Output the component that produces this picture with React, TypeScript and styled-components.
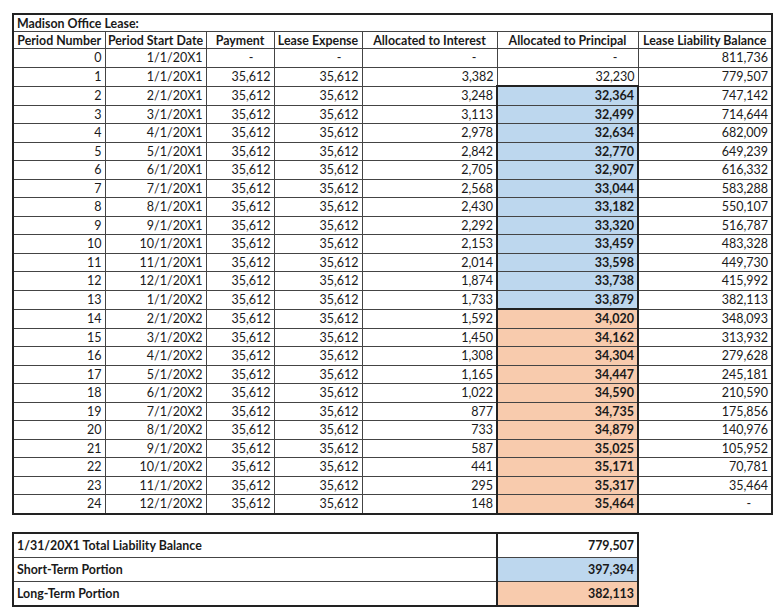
import React from "react";
import styled, { createGlobalStyle } from "styled-components";

const GlobalStyle = createGlobalStyle`
  html, body {
    margin: 0;
    padding: 0;
    background: #ffffff;
  }
  body {
    font-family: Lato, "Open Sans", "Liberation Sans", sans-serif;
    color: #1a1a1a;
  }
`;

type Fill = "none" | "blue" | "peach";

const fillColor: Record<Fill, string> = {
  none: "#ffffff",
  blue: "#bdd7ee",
  peach: "#f8cbad",
};

const Page = styled.div`
  padding: 13px 12px 0 12px;
  display: flex;
  flex-direction: column;
  gap: 17px;
`;

const Sheet = styled.table`
  border-collapse: collapse;
  table-layout: fixed;
  width: 759px;
  border: 2px solid #222;
  font-size: 12.5px;
`;

const TitleCell = styled.td`
  height: 16px;
  padding: 0 3px;
  font-weight: 700;
  font-size: 12.4px;
  text-align: left;
  border: 1px solid #444;
`;

const HeadCell = styled.th`
  height: 16px;
  padding: 0 1px;
  font-weight: 700;
  font-size: 12.4px;
  text-align: center;
  white-space: nowrap;
  border: 1px solid #444;
`;

const Cell = styled.td<{ $fill: Fill; $top?: boolean; $bottom?: boolean }>`
  height: 17.5px;
  padding: 0 3px;
  text-align: right;
  white-space: nowrap;
  background: ${(p) => fillColor[p.$fill]};
  font-weight: ${(p) => (p.$fill === "none" ? 400 : 700)};
  border: 1px solid #444;
  ${(p) =>
    p.$fill !== "none"
      ? `border-left: 2px solid #222; border-right: 2px solid #222;`
      : ""}
  ${(p) => (p.$top ? `border-top: 2px solid #222;` : "")}
  ${(p) => (p.$bottom ? `border-bottom: 2px solid #222;` : "")}
`;

const Dash = styled.span`
  padding-right: 17px;
`;

const Summary = styled.table`
  border-collapse: collapse;
  table-layout: fixed;
  width: 625px;
  border: 2px solid #222;
  font-size: 12.4px;
  font-weight: 700;
`;

const SumLabel = styled.td`
  height: 23px;
  padding: 0 3px;
  text-align: left;
  border: 1px solid #444;
`;

const SumValue = styled.td<{ $fill: Fill }>`
  height: 23px;
  padding: 0 3px;
  text-align: right;
  background: ${(p) => fillColor[p.$fill]};
  border: 1px solid #444;
  border-left: 2px solid #222;
`;

const widths = [92, 101, 68, 88, 135, 141, 134];
const headers = [
  "Period Number",
  "Period Start Date",
  "Payment",
  "Lease Expense",
  "Allocated to Interest",
  "Allocated to Principal",
  "Lease Liability Balance",
];

const dates = [
  "1/1/20X1",
  "1/1/20X1",
  "2/1/20X1",
  "3/1/20X1",
  "4/1/20X1",
  "5/1/20X1",
  "6/1/20X1",
  "7/1/20X1",
  "8/1/20X1",
  "9/1/20X1",
  "10/1/20X1",
  "11/1/20X1",
  "12/1/20X1",
  "1/1/20X2",
  "2/1/20X2",
  "3/1/20X2",
  "4/1/20X2",
  "5/1/20X2",
  "6/1/20X2",
  "7/1/20X2",
  "8/1/20X2",
  "9/1/20X2",
  "10/1/20X2",
  "11/1/20X2",
  "12/1/20X2",
];

const interest = [
  "-", "3,382", "3,248", "3,113", "2,978", "2,842", "2,705", "2,568", "2,430",
  "2,292", "2,153", "2,014", "1,874", "1,733", "1,592", "1,450", "1,308",
  "1,165", "1,022", "877", "733", "587", "441", "295", "148",
];

const principal = [
  "-", "32,230", "32,364", "32,499", "32,634", "32,770", "32,907", "33,044",
  "33,182", "33,320", "33,459", "33,598", "33,738", "33,879", "34,020",
  "34,162", "34,304", "34,447", "34,590", "34,735", "34,879", "35,025",
  "35,171", "35,317", "35,464",
];

const balance = [
  "811,736", "779,507", "747,142", "714,644", "682,009", "649,239", "616,332",
  "583,288", "550,107", "516,787", "483,328", "449,730", "415,992", "382,113",
  "348,093", "313,932", "279,628", "245,181", "210,590", "175,856", "140,976",
  "105,952", "70,781", "35,464", "-",
];

// 2..13 go to the short-term block, 14..24 to the long-term block
const fillFor = (i: number): Fill =>
  i >= 2 && i <= 13 ? "blue" : i >= 14 ? "peach" : "none";

const show = (v: string) => (v === "-" ? <Dash>-</Dash> : v);

const App = () => {
  const renderRows = () =>
    dates.map((date, i) => {
      const fill = fillFor(i);
      const payment = i === 0 ? "-" : "35,612";
      return (
        <tr key={i}>
          <Cell $fill="none">{i}</Cell>
          <Cell $fill="none">{date}</Cell>
          <Cell $fill="none">{show(payment)}</Cell>
          <Cell $fill="none">{show(payment)}</Cell>
          <Cell $fill="none">{show(interest[i])}</Cell>
          <Cell
            $fill={fill}
            $top={i === 2 || i === 14}
            $bottom={i === 13 || i === 24}
          >
            {show(principal[i])}
          </Cell>
          <Cell $fill="none">{show(balance[i])}</Cell>
        </tr>
      );
    });

  return (
    <>
      <GlobalStyle />
      <Page>
        <Sheet>
          <colgroup>
            {widths.map((w, i) => (
              <col key={i} style={{ width: w }} />
            ))}
          </colgroup>
          <tbody>
            <tr>
              <TitleCell colSpan={7}>Madison Office Lease:</TitleCell>
            </tr>
            <tr>
              {headers.map((h) => (
                <HeadCell key={h}>{h}</HeadCell>
              ))}
            </tr>
            {renderRows()}
          </tbody>
        </Sheet>

        <Summary>
          <colgroup>
            <col style={{ width: 484 }} />
            <col style={{ width: 141 }} />
          </colgroup>
          <tbody>
            <tr>
              <SumLabel>1/31/20X1 Total Liability Balance</SumLabel>
              <SumValue $fill="none">779,507</SumValue>
            </tr>
            <tr>
              <SumLabel>Short-Term Portion</SumLabel>
              <SumValue $fill="blue">397,394</SumValue>
            </tr>
            <tr>
              <SumLabel>Long-Term Portion</SumLabel>
              <SumValue $fill="peach">382,113</SumValue>
            </tr>
          </tbody>
        </Summary>
      </Page>
    </>
  );
};

export default App;
